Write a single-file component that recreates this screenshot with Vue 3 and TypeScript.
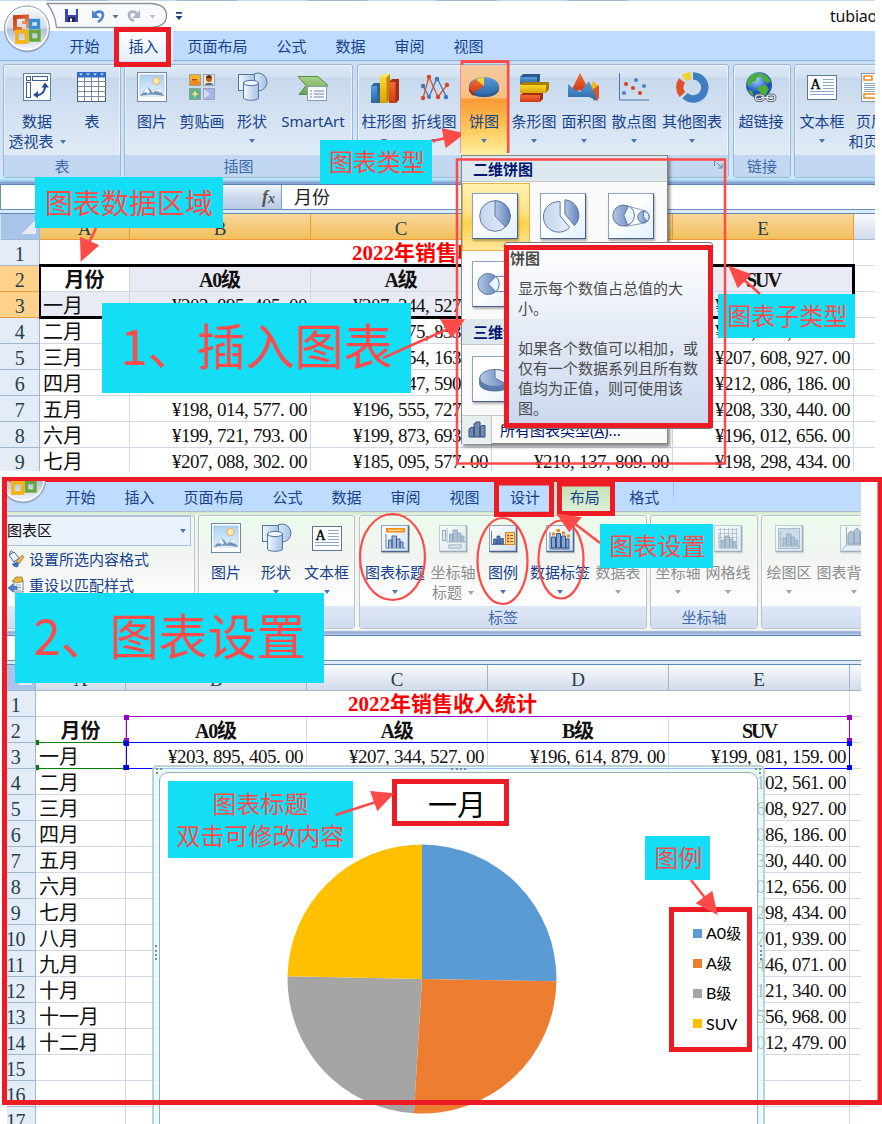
<script setup lang="ts">
interface RibbonButton { icon: string; lines: string[]; width: number; arrow?: boolean; inline?: boolean; disabled?: boolean; active?: boolean }
interface RibbonGroup { title: string; width: number; gap: number; pad?: number; combo?: boolean; launcher?: boolean; buttons: RibbonButton[] }
interface SheetRow { n: number; a?: string; b?: string; c?: string; d?: string; e?: string }

const tabs = ['开始', '插入', '页面布局', '公式', '数据', '审阅', '视图']
const chartTabs = [...tabs, '设计', '布局', '格式']

const insertGroups: RibbonGroup[] = [
  { title: '表', width: 118, gap: 3, buttons: [
    { icon: 'pivot', lines: ['数据', '透视表'], width: 66, arrow: true, inline: true },
    { icon: 'table', lines: ['表'], width: 44 },
  ] },
  { title: '插图', width: 229, gap: 4, pad: 2, buttons: [
    { icon: 'picture', lines: ['图片'], width: 50 },
    { icon: 'clipart', lines: ['剪贴画'], width: 50 },
    { icon: 'shapes', lines: ['形状'], width: 50, arrow: true },
    { icon: 'smartart', lines: ['SmartArt'], width: 72 },
  ] },
  { title: '', width: 372, gap: 4, pad: 1, launcher: true, buttons: [
    { icon: 'column', lines: ['柱形图'], width: 50, arrow: true },
    { icon: 'line', lines: ['折线图'], width: 50, arrow: true },
    { icon: 'pie', lines: ['饼图'], width: 50, arrow: true, active: true },
    { icon: 'hbar', lines: ['条形图'], width: 50, arrow: true },
    { icon: 'area', lines: ['面积图'], width: 50, arrow: true },
    { icon: 'scatter', lines: ['散点图'], width: 50, arrow: true },
    { icon: 'ring', lines: ['其他图表'], width: 66, arrow: true },
  ] },
  { title: '链接', width: 58, gap: 3, buttons: [
    { icon: 'globe', lines: ['超链接'], width: 54 },
  ] },
  { title: '', width: 160, gap: 4, buttons: [
    { icon: 'textbox', lines: ['文本框'], width: 54, arrow: true },
    { icon: 'headfoot', lines: ['页眉', '和页脚'], width: 44 },
  ] },
]

const layoutGroups: RibbonGroup[] = [
  { title: '', width: 196, gap: 3, combo: true, buttons: [] },
  { title: '', width: 157, gap: 4, pad: 2, buttons: [
    { icon: 'picture', lines: ['图片'], width: 50 },
    { icon: 'shapes', lines: ['形状'], width: 50, arrow: true },
    { icon: 'textbox', lines: ['文本框'], width: 51, arrow: true },
  ] },
  { title: '标签', width: 288, gap: 3, pad: 3, buttons: [
    { icon: 'chartTitle', lines: ['图表标题'], width: 64, arrow: true },
    { icon: 'axisTitle', lines: ['坐标轴', '标题'], width: 52, arrow: true, inline: true, disabled: true },
    { icon: 'legend', lines: ['图例'], width: 48, arrow: true },
    { icon: 'dataLabel', lines: ['数据标签'], width: 66, arrow: true },
    { icon: 'dataTable', lines: ['数据表'], width: 50, arrow: true, disabled: true },
  ] },
  { title: '坐标轴', width: 108, gap: 3, pad: 2, buttons: [
    { icon: 'axis', lines: ['坐标轴'], width: 50, arrow: true, disabled: true },
    { icon: 'gridlines', lines: ['网格线'], width: 50, arrow: true, disabled: true },
  ] },
  { title: '', width: 220, gap: 3, pad: 1, buttons: [
    { icon: 'plotArea', lines: ['绘图区'], width: 52, arrow: true, disabled: true },
    { icon: 'wall', lines: ['图表背景墙'], width: 78, arrow: true, disabled: true },
  ] },
]

const salesRows: SheetRow[] = [
  { n: 3, a: '一月', b: '¥203,895,405.00', c: '¥207,344,527.00', d: '¥196,614,879.00', e: '¥199,081,159.00' },
  { n: 4, a: '二月', c: '¥201,175,833.00', e: '¥204,102,561.00' },
  { n: 5, a: '三月', c: '¥198,154,163.00', e: '¥207,608,927.00' },
  { n: 6, a: '四月', c: '¥203,147,590.00', e: '¥212,086,186.00' },
  { n: 7, a: '五月', b: '¥198,014,577.00', c: '¥196,555,727.00', e: '¥208,330,440.00' },
  { n: 8, a: '六月', b: '¥199,721,793.00', c: '¥199,873,693.00', e: '¥196,012,656.00' },
  { n: 9, a: '七月', b: '¥207,088,302.00', c: '¥185,095,577.00', d: '¥210,137,809.00', e: '¥198,298,434.00' },
]
const bottomRows: SheetRow[] = [
  salesRows[0],
  ...salesRows.slice(1).map((r) => ({ n: r.n, a: r.a, e: r.e })),
  { n: 10, a: '八月', e: '701,939.00' },
  { n: 11, a: '九月', e: '446,071.00' },
  { n: 12, a: '十月', e: '121,340.00' },
  { n: 13, a: '十一月', e: '556,968.00' },
  { n: 14, a: '十二月', e: '012,479.00' },
  { n: 15 }, { n: 16 }, { n: 17 },
]

const books = [
  { key: 'insert', tabs, selected: '插入', groups: insertGroups, rows: salesRows },
  { key: 'layout', tabs: chartTabs, selected: '布局', groups: layoutGroups, rows: bottomRows },
]
const letters = ['A', 'B', 'C', 'D', 'E']
const cols = ['b', 'c', 'd', 'e'] as const

const series = [
  { name: 'A0', cjk: '级', value: 203895405, color: '#5b9bd5' },
  { name: 'A', cjk: '级', value: 207344527, color: '#ed7d31' },
  { name: 'B', cjk: '级', value: 196614879, color: '#a5a5a5' },
  { name: 'SUV', cjk: '', value: 199081159, color: '#ffc000' },
]
const total = series.reduce((s, x) => s + x.value, 0)
let turn = 0
const slices = series.map((s) => {
  const p = (t: number) => `${(135 + 134.5 * Math.sin(t * 2 * Math.PI)).toFixed(2)} ${(135 - 134.5 * Math.cos(t * 2 * Math.PI)).toFixed(2)}`
  const from = turn
  turn += s.value / total
  return { color: s.color, d: `M135 135L${p(from)}A134.5 134.5 0 0 1 ${p(turn)}Z` }
})

const tile = '<rect x="3" y="4.500" width="28" height="27" fill="#000" opacity=".15"/><rect x="2.500" y="3.500" width="27" height="26" fill="url(#gTile)" stroke="#8fa3bd"/><path d="M2.500 29.500H29.500V3.500" fill="none" stroke="#4d678f" stroke-width="1.500"/>'
const miniBars = (x: number, y: number, dark = '#6f8fbf') =>
  `<path d="M${x} ${y - 14}V${y}H${x + 19}" fill="none" stroke="#6b7f9c"/><path d="M${x + 2.5} ${y}v-8h3.500v8M${x + 6} ${y}v-12h4.500v12M${x + 10.5} ${y}v-9h3.500v9M${x + 14} ${y}v-6h3v6" fill="${dark}" stroke="#3d5c8f" stroke-width=".9"/>`

const icons: Record<string, string> = {
  pivot: '<rect x="2.500" y="2.500" width="27" height="27" fill="#fbfdff" stroke="#64809f"/><rect x="5.500" y="5.500" width="4" height="4" fill="#fff" stroke="#3f5f86"/><rect x="11.500" y="5.500" width="15" height="4" fill="#fff" stroke="#3f5f86"/><rect x="5.500" y="11.500" width="4" height="15" fill="#fff" stroke="#3f5f86"/><path d="M14 24c6 1 10-3 10-9" fill="none" stroke="#274f8f" stroke-width="2"/><path d="M12 24l5-4v7zM24 11.500l4 5h-7.500z" fill="#274f8f"/>',
  table: '<rect x="1.500" y="1.500" width="28" height="29" fill="#fff" stroke="#4a5f7d"/><rect x="1" y="1" width="29" height="5.500" fill="#2f6bc4"/><path d="M3 2.500h4l-2 2zM10 2.500h4l-2 2zM17 2.500h4l-2 2zM24 2.500h4l-2 2z" fill="#cfe2fb"/><path d="M8.500 6v24M15.500 6v24M22.500 6v24M2 10.500h28M2 15.500h28M2 20.500h28M2 25.500h28" stroke="#7c8a9c" stroke-width="1"/>',
  picture: '<rect x="1.500" y="1.500" width="29" height="29" fill="#fdfeff" stroke="#7289a3"/><rect x="4" y="4" width="24" height="21" fill="url(#gSky)" stroke="#9bbbd8" stroke-width=".6"/><circle cx="20.500" cy="10" r="3.600" fill="#ffe9b0" stroke="#f2a65a"/><path d="M4 25l7-9 3 2 3 4 5-5 6 8z" fill="#6f93bd"/><path d="M11 16l-4 6 3-1 2 2 2-2zM22 17l-3 4 3-1 2 2 1-1z" fill="#f4f9ff"/><path d="M4 25q12-3 24 0v1H4z" fill="#dfeaf5"/>',
  clipart: '<g stroke="#8c97a6" stroke-width=".8"><rect x="3.500" y="3.500" width="11" height="11" fill="#f7b52c"/><rect x="17.500" y="3.500" width="11" height="11" fill="#f3e6d6"/><rect x="3.500" y="17.500" width="11" height="11" fill="#5fb08b"/><rect x="17.500" y="17.500" width="11" height="11" fill="#cfdcf7"/></g><path d="M4 10h10v4H4z" fill="#ec8d17"/><path d="M6 8h5v1.500H6z" fill="#c0392b"/><path d="M19 14c0-3 8-3 8 0z" fill="#5b6a80"/><circle cx="23" cy="8" r="3" fill="#b5651d"/><path d="M20 7c0-4 6-4 6 0z" fill="#5a2d0c"/><path d="M9 19l1 3 3 1-3 1-1 3-1-3-3-1 3-1z" fill="#ffe58a"/><path d="M18 18l6 5-6 5h10V18z" fill="#8fa8e6" opacity=".7"/>',
  shapes: '<circle cx="22" cy="11" r="9" fill="url(#gShape)" stroke="#55749c"/><rect x="2.500" y="3.500" width="16" height="16" fill="url(#gShape)" stroke="#55749c"/><path d="M7.500 12v15c0 3 15 3 15 0V12z" fill="url(#gShape)" stroke="#55749c"/><ellipse cx="15" cy="12" rx="7.500" ry="2.600" fill="#eef6ff" stroke="#55749c"/>',
  smartart: '<path d="M1 5.500H21l10 9-8 9H2l7-9z" fill="url(#gGreen)" stroke="#5b8c46"/><rect x="10.500" y="15.500" width="19" height="14" fill="#f6faff" stroke="#8a9bb0"/><path d="M13 20h2M17 20h10M13 23h2M17 23h10M13 26h2M17 26h10" stroke="#6f87a5"/>',
  column: '<path d="M3 15l3-3h6v20H3z" fill="#2e659f"/><path d="M3 15h6v17H3z" fill="url(#gBlue)"/><path d="M12 6l3-3h7v26l-3 3h-7z" fill="#b98c05"/><path d="M12 6h6.500v26H12z" fill="url(#gYellow)"/><path d="M12 6l3-3h7l-3 3z" fill="#ffe56a"/><path d="M21 11l3-3h7v21l-3 3h-7z" fill="#a32e12"/><path d="M21 11h6.500v21H21z" fill="url(#gRed)"/>',
  line: '<g fill="none" stroke-width="1.300"><path d="M5 15l6 11 8-19 9 18" stroke="#3d78b5"/><path d="M5 27l6-21 9 20 9-12" stroke="#d9532c"/></g><g fill="#3d78b5"><circle cx="5" cy="15" r="2.200"/><circle cx="19" cy="8" r="2.200"/><circle cx="28" cy="26" r="2.200"/><circle cx="11" cy="26" r="2"/></g><g fill="#d9431f"><circle cx="5" cy="27" r="2.200"/><circle cx="11" cy="6" r="2.200"/><circle cx="20" cy="26" r="2.200"/><circle cx="29" cy="14" r="2.200"/></g>',
  pie: '<path d="M1 15v3c0 11 30 11 30 0v-3z" fill="#2b5c93"/><ellipse cx="16" cy="15" rx="15" ry="9" fill="url(#gBlue)"/><path d="M16 15L5.500 21.500C0 18 0 12 8 8.500z" fill="url(#gRed)"/><path d="M1 15q0 4 4.500 6.500V25Q1 22 1 18z" fill="#b32b08"/><path d="M16 15L8 8.500Q11 6.500 16 6z" fill="#ffcf30"/>',
  hbar: '<path d="M2 6l3-3h17v7l-3 3H2z" fill="#275b91"/><path d="M2 6h17v7H2z" fill="url(#gBlue)"/><path d="M2 14l3-3h26v7l-3 4H2z" fill="#a97e00"/><path d="M2 14h26v8H2z" fill="url(#gYellow)"/><path d="M2 24l3-2h20v6l-3 3H2z" fill="#a32e12"/><path d="M2 24h20v7H2z" fill="url(#gRed)"/>',
  area: '<path d="M22 15l4-5 5 6v12l-6 1z" fill="#f2b91c"/><path d="M23 20l8-6v13l-5 3z" fill="#e2521f"/><path d="M3 20L12 2l9 17z" fill="url(#gRed)"/><path d="M0 13l6 5 6 3 9-11 9 20-9-4H0z" fill="url(#gBlue)"/>',
  scatter: '<path d="M1.500 2v27H31" fill="none" stroke="#4a76a8"/><g fill="#d9431f"><circle cx="8" cy="13" r="2.100"/><circle cx="15" cy="17" r="2.100"/><circle cx="22" cy="22" r="2.100"/></g><g fill="#4a86c5"><circle cx="6" cy="22" r="2.100"/><circle cx="18" cy="9" r="2.100"/><circle cx="26" cy="15" r="2.100"/></g>',
  ring: '<g fill="none" stroke-width="7.500"><path d="M17 5A11.500 11.500 0 1 1 9 24.500" stroke="#3f7fc1"/><path d="M6.500 23.500A11.500 11.500 0 0 1 6 9.500" stroke="#e0502a"/><path d="M8 7A11.500 11.500 0 0 1 15 4.700" stroke="#f5cf2c"/></g>',
  globe: '<circle cx="14" cy="14" r="13" fill="url(#gGlobe)"/><path d="M3 9c2-5 8-8 12-7l1 3-4 1-1 4-4 1-2 4-3-1zM17 3c5 1 8 5 9 8l-4 1-4-3-2-3zM15 15l6-1 3 4-4 7-4 1-1-5-3-3zM3 19l4 1 2 5c-3-1-5-3-6-6z" fill="#4caf36"/><g fill="none" stroke="#5b6470" stroke-width="3"><rect x="10.500" y="24" width="8" height="5.500" rx="2.700"/><rect x="22" y="24" width="8" height="5.500" rx="2.700"/><path d="M16 26.700h9"/></g><g fill="none" stroke="#e4e8ed" stroke-width="1.200"><rect x="10.500" y="24" width="8" height="5.500" rx="2.700"/><rect x="22" y="24" width="8" height="5.500" rx="2.700"/><path d="M16 26.700h9"/></g>',
  textbox: '<rect x="1.500" y="4.500" width="29" height="24" fill="#fdfeff" stroke="#5f7592"/><text x="4.500" y="17.500" font-family="Liberation Serif, serif" font-size="14" fill="#000" stroke="#000" stroke-width=".4">A</text><path d="M17 8.500h11M17 11.500h11M17 14.500h11M17 17.500h11M4 20.500h24M4 23.500h24" stroke="#8fa6c4"/>',
  headfoot: '<rect x="6.500" y="2.500" width="24" height="28" fill="#fff" stroke="#8496ad"/><g fill="#fff" stroke="#e8891c" stroke-width="1.500"><rect x="9" y="5" width="8" height="4"/><rect x="9" y="23" width="18" height="4"/></g><path d="M9 12.500h18M9 14.500h18M9 16.500h18M9 18.500h18M9 20.500h18" stroke="#8da4c4"/>',
  chartTitle: `${tile}<rect x="7" y="6" width="19" height="4.500" fill="#f28f14"/><path d="M9 8.200h15" stroke="#fff1c2"/>${miniBars(7, 26, '#9db6da')}`,
  axisTitle: `${tile}<rect x="5.500" y="8.500" width="3" height="10" fill="#cfe0f4" stroke="#4d678f"/><rect x="12" y="23" width="12" height="3" fill="#cfe0f4" stroke="#4d678f"/>${miniBars(10, 20)}`,
  legend: `${tile}<path d="M4.500 9v13.500H18" fill="none" stroke="#6b7f9c"/><path d="M6.500 22v-5h3v5zM10 22v-8h3v8zM13.500 22v-5.500h3V22z" fill="#5479b4" stroke="#33528a" stroke-width=".7"/><rect x="18.500" y="10.500" width="9" height="12" fill="#ffd17c" stroke="#e0861a"/><path d="M20 13.500h2M20 16.500h2M20 19.500h2" stroke="#c0391c" stroke-width="1.500"/><path d="M23 13.500h3M23 16.500h3M23 19.500h3" stroke="#7a6440"/>`,
  dataLabel: `${tile}<path d="M6 10v17h20" fill="none" stroke="#4d678f"/><path d="M7.500 26V15h4v11zM12.500 26V11.500h4V26zM17.500 26V14h4v12zM22 26V17h3v9z" fill="#8aa7d3" stroke="#33528a"/><path d="M8 12h3M12.500 8.500h3.500M18 11h3M23 14h3" stroke="#f28a13" stroke-width="3"/>`,
  dataTable: `${tile}${miniBars(7, 18)}<path d="M7 21.500h19M7 24.500h19M13 19v8M20 19v8" stroke="#4d678f"/>`,
  axis: `${tile}${miniBars(7, 26)}`,
  gridlines: `${tile}<path d="M6 7.500h20M6 11.500h20M6 15.500h20M6 19.500h20M6 23.500h20M8.500 6v21M12.500 6v21M16.500 6v21M20.500 6v21M24.500 6v21" stroke="#6d84a8" stroke-width=".8"/>${miniBars(7, 26)}`,
  plotArea: `${tile}<rect x="5.500" y="6.500" width="21" height="20" fill="#a9c1e3" stroke="#6881a8"/>${miniBars(7.5, 24)}`,
  wall: `${tile}<path d="M8.500 5v18L4 28M8.500 23h20" fill="none" stroke="#4d678f"/><path d="M10 22V12l3-3 3 2v11zM16 22V9l3-3 3 3v13zM22 22V11l3-2 3 3v10z" fill="#7190bf" stroke="#35527f"/>`,
}

const thumbs: Record<string, string> = {
  plain: '<circle cx="23" cy="23" r="16" fill="url(#gPieL)" stroke="#58739f"/><path d="M23 23V7a16 16 0 0 1 11 27.500z" fill="url(#gPieD)" stroke="#58739f"/>',
  exploded: '<path d="M20 23V8a16 16 0 1 0 10 27z" fill="url(#gPieL)" stroke="#58739f"/><path d="M25 21V6a16 16 0 0 1 10 27z" fill="url(#gPieD)" stroke="#58739f"/>',
  ofPie: '<path d="M17 12l22 6M17 34l22-4" stroke="#8797b2"/><circle cx="15" cy="22.500" r="11" fill="url(#gPieD)" stroke="#58739f"/><path d="M15.500 22l5-9.500a11 11 0 0 1-1 20z" fill="#eaf2fb" stroke="#58739f"/><circle cx="36" cy="24" r="6" fill="url(#gPieD)" stroke="#58739f"/><path d="M36 24v-6a6 6 0 0 1 4 10.500z" fill="#dfeaf8" stroke="#58739f"/>',
  ofBar: '<path d="M20 15h24M20 31h24" stroke="#58739f"/><circle cx="16" cy="23" r="11" fill="url(#gPieD)" stroke="#58739f"/><path d="M16 23l8-8a11 11 0 0 1 0 16z" fill="#eaf2fb" stroke="#58739f"/>',
  threeD: '<path d="M7 22v6c0 10 32 10 32 0v-6z" fill="#5f7db0" stroke="#48638f"/><ellipse cx="23" cy="22" rx="16" ry="9" fill="url(#gPieD)" stroke="#58739f"/><path d="M23 22v-9a16 9 0 0 1 11 15z" fill="#dfeaf8" stroke="#58739f"/>',
}

const tipBefore = ['显示每个数值占总值的大', '小。']
const tipAfter = ['如果各个数值可以相加，或', '仅有一个数据系列且所有数', '值均为正值，则可使用该', '图。']
</script>

<template>
  <main class="page">
    <svg class="defs" width="0" height="0">
      <defs>
        <linearGradient id="gBlue" x1="0" y1="0" x2="0" y2="1"><stop offset="0" stop-color="#5a9bdb" /><stop offset="1" stop-color="#2d67a5" /></linearGradient>
        <linearGradient id="gYellow" x1="0" y1="0" x2="0" y2="1"><stop offset="0" stop-color="#fbd62f" /><stop offset="1" stop-color="#d9a400" /></linearGradient>
        <linearGradient id="gRed" x1="0" y1="0" x2="0" y2="1"><stop offset="0" stop-color="#f26a35" /><stop offset="1" stop-color="#cf3d17" /></linearGradient>
        <linearGradient id="gGreen" x1="0" y1="0" x2="0" y2="1"><stop offset="0" stop-color="#a9d489" /><stop offset="1" stop-color="#6aa24e" /></linearGradient>
        <linearGradient id="gSky" x1="0" y1="0" x2="0" y2="1"><stop offset="0" stop-color="#a9d2f5" /><stop offset="1" stop-color="#e6f3fd" /></linearGradient>
        <linearGradient id="gShape"><stop offset="0" stop-color="#f1f8ff" /><stop offset="1" stop-color="#a3c3e8" /></linearGradient>
        <linearGradient id="gTile" x1="0" y1="0" x2="1" y2="1"><stop offset="0" stop-color="#fff" /><stop offset="1" stop-color="#cfe2f8" /></linearGradient>
        <linearGradient id="gPieL"><stop offset="0" stop-color="#c3d4ec" /><stop offset="1" stop-color="#e6eefa" /></linearGradient>
        <linearGradient id="gPieD"><stop offset="0" stop-color="#b2c6e6" /><stop offset="1" stop-color="#6281b7" /></linearGradient>
        <radialGradient id="gGlobe" cx=".4" cy=".3"><stop offset="0" stop-color="#9fd0ff" /><stop offset="1" stop-color="#1b50b8" /></radialGradient>
        <linearGradient id="gOrb" x1="0" y1="0" x2="0" y2="1"><stop offset="0" stop-color="#fbfcfd" /><stop offset=".48" stop-color="#d5dce6" /><stop offset=".52" stop-color="#b1c0d6" /><stop offset="1" stop-color="#f7fafd" /></linearGradient>
        <linearGradient id="gOrange" x1="0" y1="0" x2="1" y2="1"><stop offset="0" stop-color="#c93a12" /><stop offset="1" stop-color="#f0803c" /></linearGradient>
      </defs>
    </svg>

    <section v-for="book in books" :key="book.key" class="shot" :class="book.key">
      <div class="book">
        <header class="titlebar">
          <div class="sliver"><i /><i /><i /><i /><i /></div>
          <svg class="qat" width="190" height="31" viewBox="0 0 190 31">
            <path d="M47 3.500Q55 13 56.500 27.500H150Q166.500 27 166.500 15.500T150 3.500z" fill="#f7f9fc" stroke="#8e9299" stroke-width="1.300" />
            <path d="M65 9h13v13H65z" fill="#3b46b0" /><path d="M68 9h8v6h-8z" fill="#f1f4fb" /><path d="M68 17h7v5h-7z" fill="#1f2748" /><path d="M70 18.500h2v3h-2z" fill="#fff" />
            <path d="M94 15c3-5 9-4 9 0 0 3-2 5-5 7" fill="none" stroke="#4b82cb" stroke-width="2.600" /><path d="M92 10v8h8z" fill="#4b82cb" />
            <path d="M112.500 15h6l-3 3.500z" fill="#446fa6" />
            <path d="M138 15c-3-5-9-4-9 0 0 3 2 5 5 6" fill="none" stroke="#a9b6c9" stroke-width="2.600" /><path d="M140 10v8h-8z" fill="#a9b6c9" />
            <path d="M149.500 15h6l-3 3.500z" fill="#b8bec8" />
            <path d="M176 12h6v1.800h-6zM175.500 16h7l-3.500 4z" fill="#1d3f78" />
          </svg>
          <span v-if="book.key === 'insert'" class="doc">tubiao</span>
        </header>
        <svg class="orb" width="50" height="50" viewBox="0 0 50 50">
          <circle cx="25" cy="25.500" r="23" fill="#7f8da3" opacity=".5" />
          <circle cx="25" cy="24.500" r="22.500" fill="url(#gOrb)" stroke="#8b9ab0" />
          <circle cx="25" cy="24.500" r="21" fill="none" stroke="#fff" stroke-width="1.500" opacity=".8" />
          <g fill="none" stroke-width="3.800">
            <path d="M25 19V12.500L13 13V25H20" stroke="url(#gOrange)" /><path d="M20 18.500h5.500V24" stroke="#ee8a4a" stroke-width="3" />
            <rect x="28.500" y="16.500" width="8" height="7" stroke="#3a8fd2" stroke-width="3.400" />
            <rect x="15" y="27.500" width="9.500" height="10.500" stroke="#f4b317" /><rect x="28.500" y="27.500" width="8.500" height="8.500" stroke="#67a638" stroke-width="3.400" />
          </g>
        </svg>

        <nav class="tabs">
          <span v-for="t in book.tabs" :key="t" class="tab" :class="{ on: t === book.selected }">{{ t }}</span>
          <i v-if="book.key === 'layout'" class="tabsep" />
        </nav>

        <div class="ribbon">
          <section v-for="(g, gi) in book.groups" :key="gi" class="group" :style="{ width: g.width + 'px', marginRight: g.gap + 'px' }">
            <div class="body" :style="{ paddingLeft: (g.pad ?? 0) + 'px' }">
              <div v-if="g.combo" class="selection">
                <div class="combo"><span>图表区</span><i class="arrow" /></div>
                <div class="cmd">
                  <svg width="18" height="18" viewBox="0 0 18 18"><path d="M2 5l5-3 5 6-5 4z" fill="#eef5fd" stroke="#496b94" /><path d="M3 5V2q2-3 3 1" fill="none" stroke="#496b94" /><path d="M9 12l6-7 2 2-5 7z" fill="#f0b343" stroke="#8a6a2a" stroke-width=".6" /><path d="M5 14q3-3 7-1l-1 4q-4 1-6-3z" fill="#3c6fc0" /></svg>
                  <span>设置所选内容格式</span>
                </div>
                <div class="cmd">
                  <svg width="18" height="18" viewBox="0 0 18 18"><rect x="7" y="5" width="9" height="11" fill="#fff" stroke="#6d7f99" /><path d="M9 9h5M9 11.500h5M9 14h5" stroke="#8fa1bb" /><path d="M5 5l4-4h6l1 4-5 2z" fill="#e9b63e" stroke="#8a7432" stroke-width=".7" /><path d="M1 12l5-4v2.500h4v3H6V16z" fill="#4b86d6" stroke="#2c5da0" stroke-width=".6" /></svg>
                  <span>重设以匹配样式</span>
                </div>
              </div>
              <div v-for="b in g.buttons" :key="b.icon" class="btn" :class="{ active: b.active, disabled: b.disabled }" :style="{ width: b.width + 'px' }">
                <!-- eslint-disable-next-line vue/no-v-html -->
                <svg class="icon" width="32" height="32" viewBox="0 0 32 32" v-html="icons[b.icon]" />
                <span v-for="(l, li) in b.lines" :key="l" class="line">{{ l }}<i v-if="b.inline && li === b.lines.length - 1" class="arrow" /></span>
                <i v-if="b.arrow && !b.inline" class="arrow below" />
              </div>
            </div>
            <footer class="caption">{{ g.title }}
              <svg v-if="g.launcher" class="launcher" width="10" height="9" viewBox="0 0 10 9"><path d="M.5 6V.5H6M3 3l5 5M8 4v4H4" fill="none" stroke="#6382ab" /></svg>
            </footer>
          </section>
        </div>

        <div class="formula">
          <div class="namebox" />
          <div class="fx"><i>f<small>x</small></i></div>
          <div class="value">{{ book.key === 'insert' ? '月份' : '' }}</div>
        </div>

        <div class="sheet">
          <div class="hd corner" />
          <div v-for="c in letters" :key="c" class="hd col">{{ c }}</div>
          <div class="hd" />
          <div class="rh">1</div>
          <div class="cell title">2022年销售收入统计</div>
          <div class="cell" />
          <div class="rh pick">2</div>
          <div class="cell th">月份</div>
          <div class="cell th sel"><b>A0</b>级</div>
          <div class="cell th sel"><b>A</b>级</div>
          <div class="cell th sel"><b>B</b>级</div>
          <div class="cell th sel"><b class="suv">SUV</b></div>
          <div class="cell" />
          <template v-for="r in book.rows" :key="r.n">
            <div class="rh" :class="{ pick: r.n === 3 }">{{ r.n }}</div>
            <div class="cell month" :class="{ sel: r.n === 3 }">{{ r.a }}</div>
            <div v-for="c in cols" :key="c" class="cell num" :class="{ sel: r.n === 3 }">
              <span v-if="r[c]" class="amt"><template v-for="(ch, i) in r[c]!.split('')" :key="i"><b v-if="ch === ',' || ch === '.'">{{ ch }}</b><template v-else>{{ ch }}</template></template></span>
            </div>
            <div class="cell" />
          </template>
          <div v-if="book.key === 'insert'" class="marquee" />
          <svg v-else class="ranges" width="820" height="60" viewBox="0 0 820 60">
            <g fill="none" stroke-width="1">
              <path d="M90.500 3.500H813.500V29.500H90.500z" stroke="#9a00c8" /><path d="M1 29.500H90M1 55.500H90" stroke="#008000" /><path d="M90.500 29.500H813.500V55.500H90.500z" stroke="#0000ff" />
            </g>
            <path d="M88 2h5v5h-5zM811 2h5v5h-5zM88 25h5v5h-5zM811 25h5v5h-5z" fill="#9a00c8" />
            <path d="M0 27h3v5H0zM0 52h3v5H0zM87 27h3v5h-3zM87 52h3v5h-3z" fill="#008000" />
            <path d="M88 28h5v5h-5zM811 28h5v5h-5zM88 52h5v5h-5zM811 52h5v5h-5z" fill="#0000ff" />
          </svg>
        </div>
      </div>

      <aside v-if="book.key === 'insert'" class="menu">
        <h4>二维饼图</h4>
        <div class="thumbs two">
          <!-- eslint-disable vue/no-v-html -->
          <div class="slot hot"><svg width="46" height="46" viewBox="0 0 46 46" v-html="thumbs.plain" /></div>
          <div class="slot"><svg width="46" height="46" viewBox="0 0 46 46" v-html="thumbs.exploded" /></div>
          <div class="slot"><svg width="46" height="46" viewBox="0 0 46 46" v-html="thumbs.ofPie" /></div>
          <div class="slot"><svg width="46" height="46" viewBox="0 0 46 46" v-html="thumbs.ofBar" /></div>
        </div>
        <h4>三维饼图</h4>
        <div class="thumbs">
          <div class="slot"><svg width="46" height="46" viewBox="0 0 46 46" v-html="thumbs.threeD" /></div>
        </div>
        <div class="all">
          <div class="allicon"><svg width="18" height="18" viewBox="0 0 18 18"><path d="M1 17V9l2-1.500h3V17zM6 17V4l2-2h4v15zM12 17V7l1.500-1.500H17V17z" fill="#7289b0" stroke="#344e7c" /></svg></div>
          <span>所有图表类型(<u>A</u>)...</span>
        </div>
      </aside>
      <aside v-if="book.key === 'insert'" class="tip">
        <strong>饼图</strong>
        <p><span v-for="l in tipBefore" :key="l">{{ l }}</span></p>
        <p><span v-for="l in tipAfter" :key="l">{{ l }}</span></p>
      </aside>

      <figure v-if="book.key === 'layout'" class="chart">
        <div class="plot">
          <h3>一月</h3>
          <svg class="piechart" width="270" height="270" viewBox="0 0 270 270"><path v-for="s in slices" :key="s.color" :d="s.d" :fill="s.color" /></svg>
          <ul class="legend">
            <li v-for="s in series" :key="s.name"><i :style="{ background: s.color }" /><span>{{ s.name }}<em>{{ s.cjk }}</em></span></li>
          </ul>
        </div>
        <span class="grip top" /><span class="grip left" /><span class="grip right" /><span class="grip tl" /><span class="grip tr" />
      </figure>
    </section>

    <div class="note n-type">图表类型</div>
    <div class="note n-range">图表数据区域</div>
    <div class="note n-sub">图表子类型</div>
    <div class="note n-step1"><span>1</span>、插入图表</div>
    <div class="note n-step2"><span>2</span>、图表设置</div>
    <div class="note n-set">图表设置</div>
    <div class="note n-title">图表标题<br>双击可修改内容</div>
    <div class="note n-legend">图例</div>

    <svg class="marks" width="882" height="1124" viewBox="0 0 882 1124">
      <g fill="none" stroke="#ed1c24" stroke-width="5">
        <rect x="116.500" y="29.500" width="52" height="35" />
        <rect x="506.500" y="247.500" width="204" height="178" />
        <rect x="4.500" y="479.500" width="875.500" height="623" />
        <rect x="496.500" y="483" width="55" height="31.500" />
        <rect x="559.500" y="484" width="53" height="29.500" />
        <rect x="394.500" y="781.500" width="112" height="42" />
        <rect x="671.500" y="909.500" width="78" height="140" />
      </g>
      <g fill="none" stroke="#ff4a4a" stroke-width="2.500">
        <rect x="462" y="61.500" width="46" height="90" stroke-width="3" />
        <rect x="457" y="159.500" width="268" height="304" />
        <ellipse cx="392.500" cy="557" rx="32.500" ry="43" stroke-width="2.200" />
        <ellipse cx="502.500" cy="561" rx="25" ry="43" stroke-width="2.200" />
        <ellipse cx="561" cy="559.500" rx="22.500" ry="39" stroke-width="2.200" />
        <path d="M432.500 141L446 138M96 228L89 243M383 358L450 328M760 294L743 279M600 543L574 523M335.500 815L376 802M691 880L706 899" />
      </g>
      <path d="M441.700 128.300L465 133.300 445.700 148.300zM80 236.700L99.300 245.300 80.700 261.700zM440 319.300H465L451.700 338.300zM728.300 265.700L751.700 274.300 737.700 288.300zM556 513.300L581.700 517.300 569.300 532.300zM370 791L394.300 793.300 377.300 811.300zM712.300 890.700L695.700 903.300 717.700 915z" fill="#ff4a4a" />
    </svg>
  </main>
</template>

<style>
body { margin: 0; background: #fff; }
</style>

<style scoped>
* { box-sizing: border-box; }
.page { position: relative; width: 882px; height: 1124px; overflow: hidden; background: #fff; font: 15px/20px "Noto Sans", "Noto Sans CJK SC", sans-serif; color: #15428b; }
.defs { position: absolute; }
.shot { position: relative; overflow: hidden; }
.insert { width: 875px; height: 471px; }
.layout { width: 854px; height: 643px; margin: 10px 0 0 7px; }
.book { position: relative; width: 960px; }
.layout .book { margin: -30px 0 0 -11px; }

.titlebar { position: relative; height: 31px; background: #fff; }
.sliver { position: absolute; top: 0; left: 0; right: 0; height: 1px; display: flex; gap: 70px; padding-left: 47px; background: #c5d9ec; }
.sliver i { width: 60px; background: #9db6d2; }
.qat { display: block; }
.doc { position: absolute; left: 830px; top: 6px; font-size: 16px; color: #111; letter-spacing: -.2px; }
.orb { position: absolute; left: 2px; top: 4px; z-index: 2; }

.tabs { height: 30px; display: flex; padding-left: 55px; background: #bfdbff; border-bottom: 1px solid #8db2e3; }
.tab { padding: 0 14.5px; height: 29px; line-height: 30px; white-space: nowrap; }
.insert .tab.on { background: linear-gradient(#fff, #e6eefa); border-radius: 3px 3px 0 0; height: 30px; }
.layout .tab:nth-child(n + 8) { margin-left: 1px; margin-right: -1px; padding-left: 15px; }
.layout .tab.on { background: linear-gradient(#bfe0b2, #def0d8); height: 30px; }
.tabsep { width: 1px; height: 22px; background: linear-gradient(#8fb0dc, #bfdbff); }
.layout .tabs { border-bottom-color: #b1bcc9; }

.ribbon { height: 124px; display: flex; padding: 3px 0 6px 3px; background: linear-gradient(#c9dcf3, #d4e5f6 110px, #bff3fa 117px, #a9c9ee 120px, #7397c6 122px, #9db9df); border-bottom: 1px solid #5c83b3; }
.group { flex: none; display: flex; flex-direction: column; border: 1px solid #9ab7d9; border-radius: 3px; background: linear-gradient(#dce8f5, #d3e2f2 12px, #c8d9ed 13px, #e0ebf6 92px); box-shadow: inset 0 0 0 1px rgba(255, 255, 255, .55); overflow: hidden; }
.body { flex: 1; display: flex; }
.caption { position: relative; height: 22px; line-height: 22px; text-align: center; background: #c1d8f0; color: #3e6aaa; }
.launcher { position: absolute; right: 4px; top: 5px; }
.layout .ribbon { background: linear-gradient(#cfe8c8, #eef5ee 4px, #f3f5f7 112px, #f7fafd 118px, #8fa9cf 120px, #b9cbe6); }
.layout .group { border-color: #bcc2c6; background: linear-gradient(#ebfbeb, #f1f4f1 40px, #fff 90px); }
.layout .caption { background: linear-gradient(#dfe8f5, #d0dcf0); }

.btn { flex: none; display: flex; flex-direction: column; align-items: center; padding-top: 6px; position: relative; }
.icon { display: block; flex: none; margin-bottom: 8px; overflow: visible; }
.line { height: 20px; line-height: 20px; white-space: nowrap; position: relative; }
.arrow { display: inline-block; width: 0; height: 0; border: 3px solid transparent; border-top: 4px solid #4a76ad; border-bottom: 0; margin-left: 6px; vertical-align: 3px; }
.arrow.below { margin: 8px 0 0; }
.disabled { color: #8d8d8d; }
.disabled .icon { opacity: .5; }
.disabled .arrow { border-top-color: #a3a3a3; }
.btn.active { z-index: 1; background: linear-gradient(#f3c9a0, #fbbf80 34px, #f99a33 35px, #fdc95c 65px, #fff0a0) 2px 0 / 46px 100% no-repeat; margin-top: -1px; padding-top: 7px; }

.selection { width: 188px; display: flex; flex-direction: column; }
.combo { height: 30px; margin: 0 0 0 -4px; padding: 0 4px 0 10px; display: flex; align-items: center; justify-content: space-between; background: #eaf2fc; border: 1px solid #a9c2e2; color: #111; width: 195px; }
.combo span { margin-top: -3px; }
.cmd { display: flex; align-items: center; height: 26px; padding-left: 8px; gap: 4px; white-space: nowrap; margin-left: -1px; }

.formula { height: 29px; display: flex; border-bottom: 1px solid #5f8ab5; background: #dcebfb; padding-bottom: 3px; }
.formula > div { border-bottom: 1px solid #6a8fb8; background: #fff; }
.formula .namebox { width: 110px; border-left: 1px solid #6a8fb8; }
.formula .fx { width: 172px; background: linear-gradient(#f2f5f9, #cbd9ec 50%, #b9cce6); border-right: 1px solid #7d9cc2; text-align: right; padding: 2px 6px 0 0; font: italic bold 18px/20px "Liberation Serif", serif; color: #555; }
.fx small { font-size: 14px; }
.formula .value { flex: 1; padding-left: 12px; font-size: 18px; line-height: 25px; color: #222; }
.layout .formula .fx { background: #fff; border-right-color: #fff; }

.sheet { position: relative; display: grid; grid-template-columns: 40px 90px repeat(4, 181px) 60px; grid-auto-rows: 26px; font-family: "Liberation Serif", "Noto Sans CJK SC", serif; font-size: 20px; color: #111; }
.hd { border-right: 1px solid #9eb6ce; border-bottom: 1px solid #9eb6ce; background: linear-gradient(#f8fafd, #d3dbe9); text-align: center; line-height: 29px; color: #26414a; font-size: 19px; }
.insert .hd.col { background: linear-gradient(#f9d89b, #f1bf5c); border-color: #ee9a3a; }
.hd.corner { background: linear-gradient(135deg, transparent 55%, #e6ebf2 56%) 19px 4px / 16px 16px no-repeat, #a9c4e9; border-left: 1px solid #d6e4f7; }
.rh { border-right: 1px solid #9eb6ce; border-bottom: 1px solid #9eb6ce; background: #e4ecf7; text-align: center; line-height: 28px; color: #26414a; font-size: 20px; letter-spacing: -.5px; }
.insert .rh.pick { background: #ffd28c; border-color: #ee9a3a; }
.cell { border-right: 1px solid #d0d7e5; border-bottom: 1px solid #d0d7e5; line-height: 27px; white-space: nowrap; overflow: hidden; }
.title { grid-column: 2 / 7; text-align: center; color: #f00; font-weight: bold; font-size: 21px; line-height: 26px; }
.th { text-align: center; font-weight: bold; line-height: 29px; }
.th b { letter-spacing: -1.200px; }
.th .suv { letter-spacing: -2px; }
.month { padding-left: 3px; line-height: 29px; }
.num { text-align: right; padding-right: 3px; font-size: 19px; line-height: 28px; }
.amt { letter-spacing: -.5px; }
.amt b { display: inline-block; width: 9px; font-weight: normal; text-align: left; letter-spacing: 0; }
.insert .sel { background: #e8eaf4; }
.marquee { position: absolute; left: 39px; top: 50px; width: 816px; height: 55px; border: 3px solid #000; border-left-width: 2px; }
.ranges { position: absolute; left: 40px; top: 48px; }

.menu { position: absolute; left: 461px; top: 155px; width: 207px; height: 289px; background: #fafafa; border: 1px solid #868686; box-shadow: 2px 3px 3px rgba(0, 0, 0, .45); color: #00156e; }
.menu h4 { margin: 0; height: 26px; padding-left: 11px; font-size: 15px; line-height: 26px; background: #dde7ee; border-bottom: 1px solid #c5c5c5; }
.thumbs { display: grid; grid-template-columns: repeat(3, 68px); grid-auto-rows: 68px; height: 70px; padding-top: 1px; }
.thumbs.two { height: 137px; }
.slot { padding: 10px 0 0 10px; }
.slot svg { display: block; border: 1px solid #8ba0c2; border-right-color: #46618f; border-bottom-color: #46618f; background: linear-gradient(135deg, #fff 40%, #e1f0ff); box-shadow: 1px 2px 2px rgba(0, 0, 0, .3); }
.slot.hot { background: linear-gradient(#fff0b0, #ffe48c 40%, #ffd04e 60%, #ffe79c); border: 1px solid #e2b54a; padding: 9px 0 0 9px; }
.all { height: 29px; display: flex; border-top: 1px solid #c5c5c5; line-height: 29px; white-space: nowrap; }
.allicon { width: 30px; height: 28px; padding: 4px 0 0 6px; background: #e9eeee; border-right: 1px solid #c5c5c5; line-height: 0; margin-right: 8px; }

.tip { position: absolute; left: 504px; top: 242px; width: 209px; height: 187px; padding: 5px 0 0 13px; background: linear-gradient(#fff, #c9d7ee); border: 1px solid #767676; border-radius: 3px; color: #4c4c4c; }
.tip strong { display: block; margin-left: -8px; height: 20px; }
.tip p { margin: 10px 0 0; }
.tip p + p { margin-top: 20px; }
.tip span { display: block; white-space: nowrap; }

.chart { position: absolute; left: 145px; top: 284px; width: 613px; height: 420px; margin: 0; padding: 5px; border: 2px solid rgba(176, 196, 202, .75); border-radius: 5px; background: rgba(222, 250, 250, .75); }
.plot { position: relative; display: flex; flex-direction: column; height: 400px; background: #fff; border: 1px solid #a3abaf; border-radius: 9px; color: #000; }
.plot h3 { margin: 11px 0 0 268px; font: 400 29px/38px "Noto Sans CJK SC", sans-serif; }
.piechart { display: block; margin: 22px 0 0 127px; flex: none; }
.legend { position: absolute; left: 533px; top: 145px; margin: 0; padding: 0; list-style: none; }
.legend li { display: flex; align-items: center; height: 30.200px; gap: 4px; font: 16px/20px "Lato", "Noto Sans CJK SC", sans-serif; }
.legend i { width: 9px; height: 9px; }
.legend em { font-style: normal; font-size: 15px; }
.grip { position: absolute; }
.grip.top { left: 297px; top: 1px; width: 15px; border-top: 2px dotted #7c8d92; }
.grip.left { left: 1px; top: 178px; height: 15px; border-left: 2px dotted #7c8d92; }
.grip.right { right: 1px; top: 178px; height: 15px; border-left: 2px dotted #7c8d92; }
.grip.tl { left: 2px; top: 1px; width: 6px; height: 6px; border: 2px dotted #7c8d92; border-right: 0; border-bottom: 0; }
.grip.tr { right: 2px; top: 1px; width: 6px; height: 6px; border: 2px dotted #7c8d92; border-left: 0; border-bottom: 0; }

.note { position: absolute; display: flex; align-items: center; justify-content: center; text-align: center; padding-bottom: 2px; background: #14def5; color: #ff4a4a; font: 24px/32px "Noto Sans CJK SC", sans-serif; white-space: nowrap; }
.n-type { left: 320px; top: 140px; width: 112px; height: 44px; padding-left: 2px; }
.n-range { left: 35px; top: 177px; width: 188px; height: 51px; font-size: 28px; }
.n-sub { left: 718px; top: 294px; width: 137px; height: 44px; padding-left: 2px; }
.n-step1 { left: 102px; top: 303px; width: 309px; height: 90px; font-size: 49px; padding-bottom: 9px; }
.n-step2 { left: 15px; top: 593px; width: 309px; height: 90px; font-size: 49px; padding-bottom: 9px; }
.n-set { left: 600px; top: 524px; width: 113px; height: 44px; padding-left: 2px; }
.n-title { left: 168px; top: 781px; width: 185px; height: 77px; }
.n-legend { left: 645px; top: 836px; width: 65px; height: 44px; padding-left: 2px; }
.marks { position: absolute; left: 0; top: 0; }
</style>
